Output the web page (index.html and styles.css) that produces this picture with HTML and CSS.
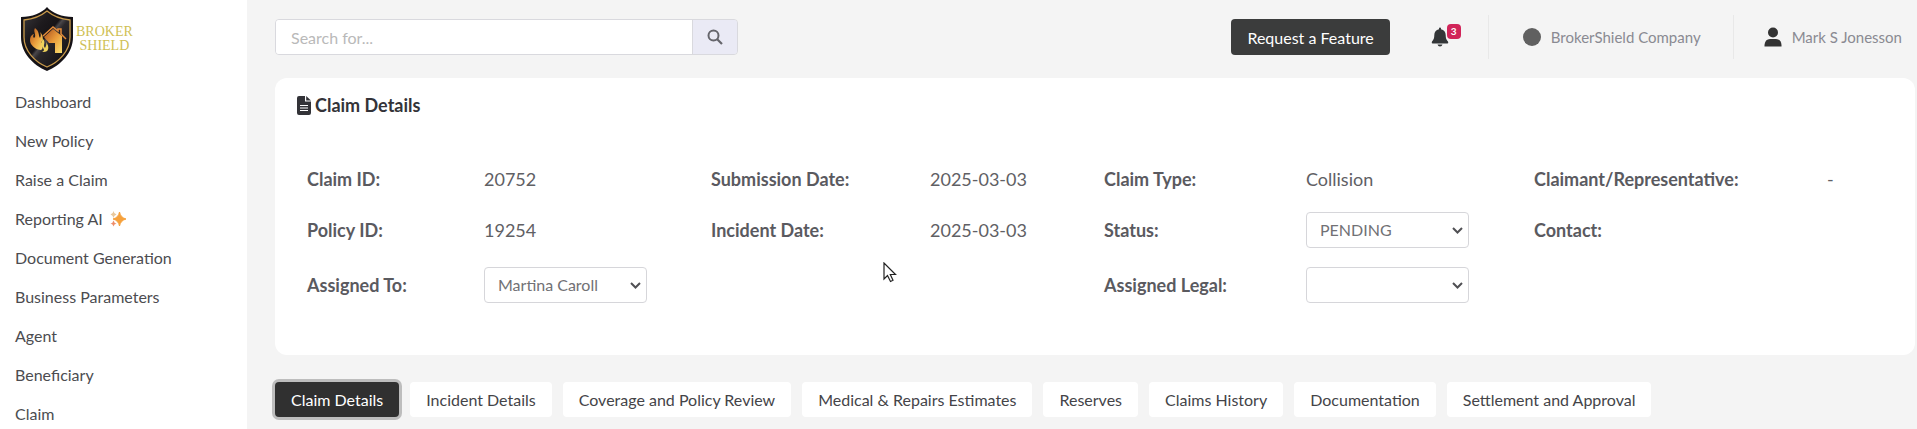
FILE: index.html
```html
<!DOCTYPE html>
<html lang="en">
<head>
<meta charset="utf-8">
<title>Claim Details</title>
<link rel="stylesheet" href="styles.css">
</head>
<body>
<div class="app">
  <aside class="sidebar">
    <a class="brand" href="#">
      <svg class="brand-mark" viewBox="0 0 54 66" aria-hidden="true">
        <defs>
          <linearGradient id="steel" x1="0" y1="0" x2="1" y2="1"><stop offset="0" stop-color="#3a383b"/><stop offset=".3" stop-color="#1d1a1d"/><stop offset=".46" stop-color="#171417"/><stop offset=".5" stop-color="#4a474a"/><stop offset=".56" stop-color="#2a272a"/><stop offset="1" stop-color="#0c0a0c"/></linearGradient>
          <linearGradient id="gold" x1="0" y1="0" x2="1" y2="1"><stop offset="0" stop-color="#a84d1c"/><stop offset=".5" stop-color="#e89a3a"/><stop offset="1" stop-color="#fbe06f"/></linearGradient>
        </defs>
        <path d="M27 1C22 7 12 11 1 11V31C1 47 13 59 27 65C41 59 53 47 53 31V11C42 11 32 7 27 1Z" fill="#151216"/>
        <path d="M27 5C21 10 14 13 4 14V31C4 45 15 56 27 61C39 56 50 45 50 31V14C40 13 33 10 27 5Z" fill="url(#steel)" stroke="#c99b4c" stroke-width="1.3"/>
        <path d="M15 22C20 26 18 29 20 32C21 30 21 28 20 26C24 30 23 34 21 37C23 40 23 43 21 44C17 44 13 41 11 38C9 34 10 29 14 28C12 31 14 33 15 31C16 28 13 25 15 22Z" fill="url(#gold)"/>
        <path d="M22 32C27 36 22 39 25 42C26 40 27 38 26 36C30 41 29 47 22 46C27 44 21 41 21 38C21 36 23 35 22 32Z" fill="#efd35c"/>
        <path d="M24 31L33 23L42 30V47H35V37H29C27 34 25 33 24 31Z" fill="url(#gold)"/>
        <path d="M23 30L33 21L38 25V23H41V28L46 33" fill="none" stroke="#e58c3a" stroke-width="1.5"/>
      </svg>
      <span class="brand-name">BROKER<br>SHIELD</span>
    </a>
    <nav class="menu">
      <a href="#">Dashboard</a>
      <a href="#">New Policy</a>
      <a href="#">Raise a Claim</a>
      <a href="#">Reporting AI
        <svg class="sparkles" viewBox="0 0 16 16" aria-hidden="true"><path d="M9.500 1Q10.500 6.500 16 8Q10.500 9.500 9.500 15Q8.500 9.500 3 8Q8.500 6.500 9.500 1Z" fill="#f6a13c" stroke="#f6a13c"/><path d="M3.500 0Q4 3 6.500 3.500Q4 4 3.500 7Q3 4 .5 3.500Q3 3 3.500 0Z" fill="#e9c89c"/><path d="M3.500 9.500Q4 12 6.500 12.500Q4 13 3.500 15.500Q3 13 .5 12.500Q3 12 3.500 9.500Z" fill="#ee8d6a"/></svg></a>
      <a href="#">Document Generation</a>
      <a href="#">Business Parameters</a>
      <a href="#">Agent</a>
      <a href="#">Beneficiary</a>
      <a href="#">Claim</a>
    </nav>
  </aside>

  <div class="page">
    <header class="topbar">
      <form class="search" role="search">
        <input class="search-input" type="search" placeholder="Search for..." aria-label="Search">
        <button class="search-button" type="button" aria-label="Submit search">
          <svg width="16" height="16" viewBox="0 0 16 16" aria-hidden="true"><circle cx="6.500" cy="6.500" r="5" fill="none" stroke="currentColor" stroke-width="2"/><path d="M10 10L15 15" stroke="currentColor" stroke-width="2.200"/></svg>
        </button>
      </form>
      <div class="tools">
        <button class="feature-button" type="button">Request a Feature</button>
        <button class="bell" type="button" aria-label="Notifications">
          <svg width="18" height="20" viewBox="0 0 18 20" aria-hidden="true"><path d="M8 1.500Q8 .5 9 .5T10 1.500V2.200C13 2.700 14.700 5 14.700 8C14.700 12 15.800 13 17 14.500Q17.800 16.500 16.500 16.500H1.500Q.2 16.500 1 14.500C2.200 13 3.300 12 3.300 8C3.300 5 5 2.700 8 2.200Z" fill="currentColor"/><path d="M6.500 17.500H11.500Q11 19.500 9 19.500T6.500 17.500Z" fill="currentColor"/></svg>
          <span class="badge">3</span>
        </button>
        <a class="account" href="#">
          <span class="company-dot"></span>
          <span>BrokerShield Company</span>
        </a>
        <a class="account" href="#">
          <svg width="18" height="20" viewBox="0 0 18 20" aria-hidden="true"><circle cx="9" cy="5.500" r="5" fill="#333"/><path d="M.5 19.500V18Q1 12 6 12H12Q17 12 17.500 18V19.500Z" fill="#333"/></svg>
          <span>Mark S Jonesson</span>
        </a>
      </div>
    </header>

    <main>
      <section class="card">
        <h1 class="card-title">
          <svg width="14" height="19" viewBox="0 0 14 19" aria-hidden="true"><path d="M2 0H8V5.500H14V17Q14 19 12 19H2Q0 19 0 17V2Q0 0 2 0Z" fill="currentColor"/><path d="M9.200 0L14 4.500H9.200Z" fill="currentColor"/><path d="M3 9.500H11M3 12H11M3 14.500H11" stroke="#fff" stroke-width="1.200"/></svg>
          Claim Details
        </h1>
        <div class="fields">
          <span class="label">Claim ID:</span><span>20752</span>
          <span class="label">Submission Date:</span><span>2025-03-03</span>
          <span class="label">Claim Type:</span><span>Collision</span>
          <span class="label">Claimant/Representative:</span><span>-</span>

          <span class="label">Policy ID:</span><span>19254</span>
          <span class="label">Incident Date:</span><span>2025-03-03</span>
          <label class="label" for="status">Status:</label>
          <select class="select" id="status"><option>PENDING</option></select>
          <span class="label">Contact:</span><span></span>

          <label class="label" for="assigned-to">Assigned To:</label>
          <select class="select" id="assigned-to"><option>Martina Caroll</option></select>
          <span></span><span></span>
          <label class="label" for="assigned-legal">Assigned Legal:</label>
          <select class="select" id="assigned-legal"><option></option></select>
        </div>
      </section>

      <div class="tabs" role="tablist">
        <button class="tab tab-active" type="button" role="tab" aria-selected="true">Claim Details</button>
        <button class="tab" type="button" role="tab">Incident Details</button>
        <button class="tab" type="button" role="tab">Coverage and Policy Review</button>
        <button class="tab" type="button" role="tab">Medical &amp; Repairs Estimates</button>
        <button class="tab" type="button" role="tab">Reserves</button>
        <button class="tab" type="button" role="tab">Claims History</button>
        <button class="tab" type="button" role="tab">Documentation</button>
        <button class="tab" type="button" role="tab">Settlement and Approval</button>
      </div>
    </main>
  </div>
</div>
<svg class="pointer" width="14" height="21" viewBox="0 0 14 21" aria-hidden="true"><path d="M1 1V17L4.500 13.500L7.500 19.500L10 18.300L7.300 12.500H12.500Z" fill="#fff" stroke="#222" stroke-width="1.200"/></svg>
</body>
</html>
```
FILE: styles.css
```css
* {
  box-sizing: border-box;
}

body {
  margin: 0;
  background: #f4f4f4;
  color: #4c4c50;
  font: 16px/20px Lato, "Liberation Sans", sans-serif;
}

button,
input,
select {
  margin: 0;
  font: inherit;
}

a {
  color: inherit;
  text-decoration: none;
}

svg {
  flex: none;
}

.app {
  display: flex;
  min-height: 100vh;
}

.sidebar {
  flex: 0 0 247px;
  background: #fff;
}

.brand {
  display: flex;
  align-items: center;
  gap: 2px;
  padding: 6px 20px 0;
}

.brand-mark {
  width: 54px;
  height: 66px;
}

.brand-name {
  color: #cfbf55;
  font: 14px/14px "Liberation Serif", serif;
  text-align: center;
}

.menu {
  display: flex;
  flex-direction: column;
  padding: 10px 15px 0;
}

.menu a {
  display: flex;
  align-items: center;
  gap: 7px;
  height: 39px;
}

.sparkles {
  width: 16px;
  height: 16px;
}

.page {
  flex: 1;
  min-width: 0;
  padding: 0 2px 12px 28px;
}

.topbar {
  display: flex;
  align-items: center;
  justify-content: space-between;
  height: 78px;
  padding: 0 13px 4px 0;
}

.search {
  display: flex;
  flex: 0 1 463px;
  height: 36px;
  border: 1px solid #d9d9de;
  border-radius: 4px;
  overflow: hidden;
}

.search-input {
  flex: 1;
  min-width: 0;
  padding: 2px 15px 0;
  border: 0;
  background: #fff;
}

.search-input::placeholder {
  color: #b9b9b9;
  opacity: 1;
}

.search-button {
  width: 45px;
  padding: 0;
  border: 0;
  border-left: 1px solid #d9d9de;
  background: #eaeaf5;
  color: #66666c;
}

.search-button svg {
  display: block;
  margin: 0 auto;
}

.tools {
  display: flex;
  align-items: center;
}

.feature-button {
  height: 36px;
  padding: 2px 16px 0;
  border: 0;
  border-radius: 4px;
  background: #3b3c3c;
  color: #fff;
}

.bell {
  position: relative;
  width: 98px;
  height: 44px;
  padding: 0 0 0 41px;
  border: 0;
  background: none;
  color: #333638;
}

.bell svg {
  display: block;
}

.badge {
  position: absolute;
  top: 9px;
  left: 57px;
  width: 14px;
  height: 15px;
  border-radius: 4px;
  background: #d12459;
  color: #fff;
  font-size: 10px;
  font-weight: 700;
  line-height: 15px;
  text-align: center;
}

.account {
  display: flex;
  align-items: center;
  gap: 10px;
  height: 44px;
  padding-left: 34px;
  border-left: 1px solid #e8e8e8;
  color: #8a8a92;
  font-size: 15px;
}

.account + .account {
  margin-left: 32px;
  padding-left: 30px;
}

.company-dot {
  width: 18px;
  height: 18px;
  border-radius: 50%;
  background: #606060;
}

.card {
  padding: 17px 22px 52px;
  border-radius: 12px;
  background: #fff;
}

.card-title {
  display: flex;
  align-items: center;
  gap: 4px;
  margin: 0 0 50px;
  color: #333338;
  font-size: 18px;
  font-weight: 700;
  line-height: 20px;
}

.fields {
  display: grid;
  grid-template-columns: 177fr 227fr 219fr 174fr 202fr 228fr 293fr 66fr;
  grid-template-rows: 28px 36px 36px;
  align-items: center;
  row-gap: 19px;
  padding-left: 10px;
  color: #606064;
  font-size: 18px;
}

.label {
  color: #5a5a5f;
  font-weight: 700;
}

.select {
  width: 163px;
  height: 36px;
  padding: 0 36px 0 13px;
  border: 1px solid #d6d6da;
  border-radius: 4px;
  appearance: none;
  background: #fff url("data:image/svg+xml,%3Csvg xmlns='http://www.w3.org/2000/svg' width='11' height='7' viewBox='0 0 11 7'%3E%3Cpath d='M1 1L5.500 5.500L10 1' fill='none' stroke='%23505054' stroke-width='2'/%3E%3C/svg%3E") no-repeat right 5px center;
  color: #717175;
  font-size: 16px;
}

.tabs {
  display: flex;
  flex-wrap: wrap;
  gap: 11px;
  padding-top: 27px;
}

.tab {
  height: 35px;
  padding: 0 16px;
  border: 0;
  border-radius: 4px;
  background: #fff;
  color: #444448;
}

.tab-active {
  background: #303030;
  box-shadow: 0 0 0 3px #bdbdbd;
  color: #fff;
}

.pointer {
  position: absolute;
  top: 262px;
  left: 883px;
}
```
